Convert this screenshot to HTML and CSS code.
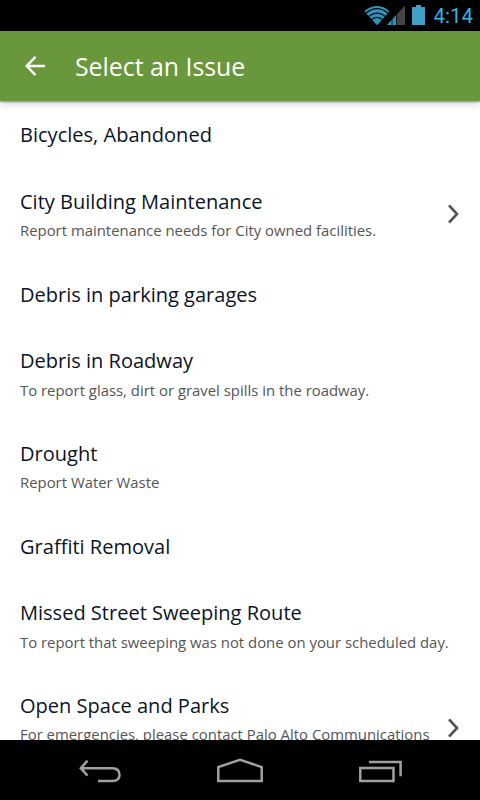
FILE: index.html
```html
<!DOCTYPE html>
<html lang="en">
<head>
<meta charset="utf-8">
<title>Select an Issue</title>
<link rel="stylesheet" href="styles.css">
</head>
<body>
<div class="screen">
  <div class="status">
    <svg class="status-icons" width="64" height="31" viewBox="0 0 64 31">
      <path d="M0.3 11.2Q13 1 25.5 11.2L13 25.2Z" fill="#2f93bd"/>
      <g fill="none" stroke="#000" stroke-width="1.1">
        <path d="M2 13Q13 4.2 24 13"/>
        <path d="M4.8 16.4Q13 9.8 21.2 16.4"/>
        <path d="M7.6 19.6Q13 15.2 18.4 19.6"/>
      </g>
      <path d="M41 5.5V25H23Z" fill="#444"/>
      <path d="M32 15.2V25H23Z" fill="#2f93bd"/>
      <path d="M28 18V25M32.5 14V25" stroke="#000" stroke-width=".7"/>
      <path d="M52 5h5v2h4v18H48V7h4z" fill="#439fc7"/>
    </svg>
    <span class="clock">4:14</span>
  </div>
  <header class="bar">
    <svg class="back" width="22" height="22" viewBox="0 0 22 22" fill="none" stroke="#fff" stroke-width="2.4"><path d="M10.5 1.8L1.7 11L10.5 20.2M1.8 11H20"/></svg>
    <h1>Select an Issue</h1>
  </header>
  <main class="list">
    <div class="row"><div class="text"><h2>Bicycles, Abandoned</h2></div></div>
    <div class="row"><div class="text"><h2>City Building Maintenance</h2><p>Report maintenance needs for City owned facilities.</p></div>
      <svg class="chevron" width="14" height="20" viewBox="0 0 14 20"><path d="M2 1.4L10 10L2 18.6"/></svg></div>
    <div class="row"><div class="text"><h2>Debris in parking garages</h2></div></div>
    <div class="row"><div class="text"><h2>Debris in Roadway</h2><p>To report glass, dirt or gravel spills in the roadway.</p></div></div>
    <div class="row"><div class="text"><h2>Drought</h2><p>Report Water Waste</p></div></div>
    <div class="row"><div class="text"><h2>Graffiti Removal</h2></div></div>
    <div class="row"><div class="text"><h2>Missed Street Sweeping Route</h2><p>To report that sweeping was not done on your scheduled day.</p></div></div>
    <div class="row tall"><div class="text"><h2>Open Space and Parks</h2><p>For emergencies, please contact Palo Alto Communications</p></div>
      <svg class="chevron" width="14" height="20" viewBox="0 0 14 20"><path d="M2 1.4L10 10L2 18.6"/></svg></div>
  </main>
  <nav class="nav">
    <svg width="42" height="26" viewBox="0 0 42 26"><path d="M8.5 1.7L1.8 9.2L8.5 16.7M2 9.2H33.5Q40.5 9.5 40.5 15.7T33.5 21.9H19"/></svg>
    <svg width="48" height="26" viewBox="0 0 48 26"><path d="M2.3 21.9V8.1L24 .7L45.7 8.1V21.9Z"/></svg>
    <svg width="44" height="26" viewBox="0 0 44 26"><path d="M2.3 9.1H35.5V21.9H2.3ZM11 3.1H42.6V17.2"/></svg>
  </nav>
</div>
</body>
</html>
```

FILE: styles.css
```css
* { box-sizing: border-box; }
body { margin: 0; font-family: "Open Sans", "Noto Sans", sans-serif; background: #fff; }
h1, h2, p { margin: 0; font-weight: 400; white-space: nowrap; }
.screen { width: 480px; height: 800px; overflow: hidden; display: flex; flex-direction: column; }
.status { flex: none; height: 31px; background: #000; display: flex; justify-content: flex-end; padding-right: 7px; }
.status-icons { flex: none; }
.clock { width: 45px; font: 20.5px/32px Roboto, sans-serif; color: #33b5e5; text-align: right; }
.bar { flex: none; height: 70px; background: #69973b; display: flex; align-items: center; padding-left: 25px; box-shadow: 0 1px 2px rgba(0,0,0,.4), 0 3px 8px rgba(0,0,0,.16); z-index: 1; }
.back { margin-right: 28px; }
h1 { font-size: 24.85px; line-height: 34px; color: #fff; }
.list { flex: 1; min-height: 0; overflow: hidden; }
.row { display: flex; align-items: center; justify-content: space-between; padding: 20.1px 19px 18.2px 20px; }
h2 { font-size: 20.05px; line-height: 28.6px; color: #0b1426; }
p { font-size: 14.9px; line-height: 20px; margin: 3.5px 0 2.2px; color: #555; }
.tall { height: 113px; }
.tall .text { align-self: flex-start; }
.chevron { flex: none; overflow: visible; margin-bottom: 2.2px; fill: none; stroke: #555; stroke-width: 2.7; }
.nav { flex: none; height: 60px; background: #000; display: flex; align-items: center; padding: 4px 78px 0 79px; justify-content: space-between; }
.nav svg { fill: none; stroke: #a0a0a0; stroke-width: 2.5; overflow: visible; }
```
